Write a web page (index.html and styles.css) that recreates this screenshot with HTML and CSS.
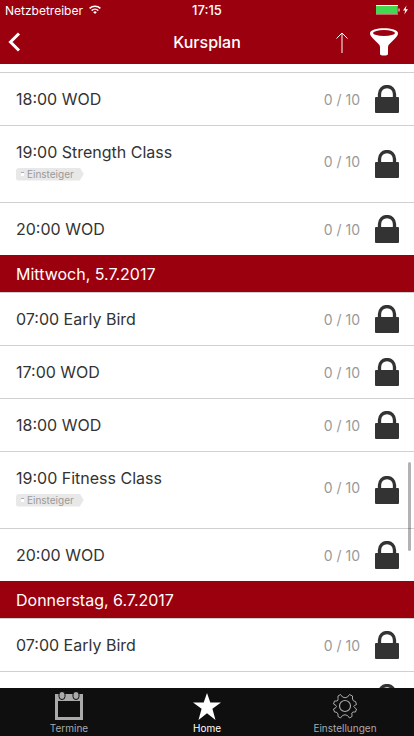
FILE: index.html
```html
<!DOCTYPE html>
<html lang="de">
  <head>
    <meta charset="UTF-8" />
    <meta name="viewport" content="width=device-width, initial-scale=1.0" />
    <title>Kursplan</title>
    <link rel="stylesheet" href="styles.css" />
  </head>
  <body>
    <svg class="sprite" aria-hidden="true">
      <symbol id="lock" viewBox="0 0 24 28">
        <path d="M4.500 13V9a7.500 7.500 0 0 1 15 0V13" fill="none" stroke="#333" stroke-width="3.300" />
        <rect y="12" width="24" height="16" rx="1" fill="#333" />
      </symbol>
    </svg>

    <header class="top">
      <div class="status">
        <div class="carrier">
          <span>Netzbetreiber</span>
          <svg width="12" height="10" viewBox="0 0 12 10" fill="none" stroke="#fff" stroke-width="1.5">
            <path d="M.6 3.4a7.6 7.6 0 0 1 10.8 0M2.7 5.6a4.7 4.7 0 0 1 6.6 0" />
            <path d="M6 9 4.2 7.2a2.6 2.6 0 0 1 3.6 0z" fill="#fff" stroke="none" />
          </svg>
        </div>
        <span class="time">17:15</span>
        <div class="battery">
          <svg width="33" height="10" viewBox="0 0 33 10">
            <path d="M0 .5h22" stroke="#fff" />
            <rect x="0" y="1" width="21" height="8" fill="#44d750" />
            <path d="M0 9.500h22M21.500 1v8" stroke="#c9606a" />
            <path d="M23 3.500v3" stroke="#fff" />
            <path d="M30.500 .5 27 5.500h2.200L28.300 9.500 32 4.300h-2.300z" fill="#fff" />
          </svg>
        </div>
      </div>
      <nav class="navbar">
        <button class="back" aria-label="Zurück">
          <svg width="14" height="20" viewBox="0 0 14 20">
            <path d="M11 1.500 2.500 10l8.500 8.500" fill="none" stroke="#fff" stroke-width="3" />
          </svg>
        </button>
        <h1>Kursplan</h1>
        <div class="actions">
          <button aria-label="Nach oben">
            <svg width="12" height="21" viewBox="0 0 12 21" fill="none">
              <path d="M6 1v20" stroke="#cd7f86" stroke-width="2" />
              <path d="M.5 6.500 6 1l5.500 5.500" stroke="#fff" />
            </svg>
          </button>
          <button aria-label="Filter">
            <svg width="28" height="28" viewBox="0 0 28 28">
              <path d="M0 5C0-1.500 28-1.500 28 5c0 2-1 3.500-3 5.500l-5.500 5.500c-1 1-1.500 2-1.500 3.500V26c0 2-8 2-8 0v-6.500c0-1.500-.5-2.500-1.500-3.500L3 10.500C1 8.500 0 7 0 5z" fill="#fff" />
              <ellipse cx="14" cy="5" rx="11" ry="3" fill="#9b000e" />
            </svg>
          </button>
        </div>
      </nav>
    </header>

    <main class="schedule">
      <ul class="courses">
        <li class="course">
          <h3>18:00 WOD</h3>
          <span class="count">0 / 10</span>
          <svg class="lock"><use href="#lock" /></svg>
        </li>
        <li class="course tagged">
          <div class="info">
            <h3>19:00 Strength Class</h3>
            <span class="tag">Einsteiger</span>
          </div>
          <span class="count">0 / 10</span>
          <svg class="lock"><use href="#lock" /></svg>
        </li>
        <li class="course">
          <h3>20:00 WOD</h3>
          <span class="count">0 / 10</span>
          <svg class="lock"><use href="#lock" /></svg>
        </li>
      </ul>

      <h2 class="day">Mittwoch, 5.7.2017</h2>
      <ul class="courses">
        <li class="course">
          <h3>07:00 Early Bird</h3>
          <span class="count">0 / 10</span>
          <svg class="lock"><use href="#lock" /></svg>
        </li>
        <li class="course">
          <h3>17:00 WOD</h3>
          <span class="count">0 / 10</span>
          <svg class="lock"><use href="#lock" /></svg>
        </li>
        <li class="course">
          <h3>18:00 WOD</h3>
          <span class="count">0 / 10</span>
          <svg class="lock"><use href="#lock" /></svg>
        </li>
        <li class="course tagged">
          <div class="info">
            <h3>19:00 Fitness Class</h3>
            <span class="tag">Einsteiger</span>
          </div>
          <span class="count">0 / 10</span>
          <svg class="lock"><use href="#lock" /></svg>
        </li>
        <li class="course">
          <h3>20:00 WOD</h3>
          <span class="count">0 / 10</span>
          <svg class="lock"><use href="#lock" /></svg>
        </li>
      </ul>

      <h2 class="day">Donnerstag, 6.7.2017</h2>
      <ul class="courses">
        <li class="course">
          <h3>07:00 Early Bird</h3>
          <span class="count">0 / 10</span>
          <svg class="lock"><use href="#lock" /></svg>
        </li>
        <li class="course">
          <svg class="lock"><use href="#lock" /></svg>
        </li>
      </ul>
      <div class="scrollbar"></div>
    </main>

    <nav class="tabs">
      <a href="#termine">
        <svg width="28" height="28" viewBox="0 0 28 28">
          <path d="M0 2h28v26H0zM3 9v16h22V9z" fill="#aaa" fill-rule="evenodd" />
          <g fill="#aaa" stroke="#100f10">
            <rect x="4" y="-.5" width="6" height="8" rx="3" />
            <rect x="18" y="-.5" width="6" height="8" rx="3" />
          </g>
        </svg>
        <span>Termine</span>
      </a>
      <a href="#home" class="active">
        <svg width="28" height="28" viewBox="0 0 28 28">
          <path d="m14 1 3.300 9.500H28l-8.600 6.300L22.500 28 14 21.200 5.500 28l3.100-11.200L0 10.500h10.700z" fill="#fff" />
        </svg>
        <span>Home</span>
      </a>
      <a href="#einstellungen">
        <svg width="28" height="28" viewBox="0 0 28 28" fill="none" stroke="#aaa">
          <path d="M9.500 2.500 11.500 5Q14 6.500 16.500 5L18.500 2.500 21.500 4V7Q22 9.500 24.500 9.500L25.500 12.500 23.500 13.500Q22 14.500 23.500 15.500L25.500 17 24.500 20H22Q20 20.500 21 23V24.500L18.500 26 16.500 23.500Q14 22 11.500 23.500L9.500 26 7 24.500V22Q6.500 20 4 20H3.500L2.500 17 5 15.500Q6 14.500 5 13.500L2.500 12 3.500 9H6Q7.500 8.500 7 6.500V4z" />
          <circle cx="14" cy="14" r="5.500" stroke-width="1.200" />
        </svg>
        <span>Einstellungen</span>
      </a>
    </nav>
  </body>
</html>
```
FILE: styles.css
```css
* {
  box-sizing: border-box;
}

body {
  margin: 0;
  height: 100vh;
  display: flex;
  flex-direction: column;
  overflow: hidden;
  background: #fff;
  color: #333;
  font-family: Inter, "Liberation Sans", sans-serif;
  font-size: 16px;
}

h1,
h2,
h3,
ul {
  margin: 0;
  padding: 0;
  font-size: 16px;
  font-weight: 400;
  list-style: none;
}

svg {
  display: block;
}

button {
  padding: 0;
  border: none;
  background: none;
  cursor: pointer;
}

.sprite {
  display: none;
}

/* Status bar and title */
.top {
  background: #9b000e;
  color: #fff;
}

.status {
  height: 20px;
  padding: 0 5px;
  display: grid;
  grid-template-columns: 1fr auto 1fr;
  align-items: center;
  font-size: 12px;
}

.carrier {
  display: flex;
  align-items: center;
  gap: 6px;
}

.time {
  font-size: 13px;
  font-weight: 500;
}

.battery {
  justify-self: end;
}

.navbar {
  height: 44px;
  padding: 0 16px;
  display: grid;
  grid-template-columns: 1fr auto 1fr;
  align-items: center;
}

.back {
  justify-self: start;
  margin-left: -8px;
}

.navbar h1 {
  font-weight: 500;
}

.actions {
  display: flex;
  justify-content: flex-end;
  align-items: center;
  gap: 22px;
}

/* Course list */
.schedule {
  position: relative;
  flex: 1;
  min-height: 0;
  padding-top: 8px;
  overflow: hidden;
}

.courses:first-child {
  border-top: 1px solid #d0d0d0;
}

.course {
  display: flex;
  align-items: center;
  min-height: 53px;
  padding: 0 15px 0 16px;
  border-bottom: 1px solid #d0d0d0;
}

.course:last-child {
  min-height: 52px;
  border-bottom: none;
}

.tagged {
  min-height: 77px;
}

.info {
  display: flex;
  flex-direction: column;
  align-items: flex-start;
  gap: 6px;
}

.count {
  margin-left: auto;
  color: #999;
  font-size: 14px;
}

.tagged .info,
.tagged .count {
  padding-bottom: 6px;
}

.lock {
  width: 24px;
  height: 28px;
  margin-left: 15px;
}

.lock:first-child {
  margin-left: auto;
}

.tag {
  display: flex;
  align-items: center;
  height: 13px;
  padding: 0 10px 0 5px;
  border-radius: 3px 0 0 3px;
  background: #e8e8e8;
  clip-path: polygon(0 0, calc(100% - 4px) 0, 100% 50%, calc(100% - 4px) 100%, 0 100%);
  color: #999;
  font-size: 10px;
}

.tag::before {
  content: "";
  width: 3px;
  height: 3px;
  margin-right: 3px;
  border-top: 1px solid #aaa;
  background: #fff;
}

.day {
  height: 38px;
  padding: 0 16px;
  border-bottom: 1px solid #d0d0d0;
  background: #9b000e;
  color: #fff;
  line-height: 38px;
}

.scrollbar {
  position: absolute;
  top: 398px;
  right: 3px;
  width: 3px;
  height: 89px;
  border-radius: 2px;
  background: rgba(0, 0, 0, 0.3);
}

/* Bottom tabs */
.tabs {
  display: flex;
  height: 48px;
  background: #100f10;
}

.tabs a {
  flex: 1;
  display: flex;
  flex-direction: column;
  align-items: center;
  gap: 2px;
  padding-top: 4px;
  color: #aaa;
  font-size: 10px;
  line-height: 12px;
  text-decoration: none;
}

.tabs .active {
  color: #fff;
}
```
